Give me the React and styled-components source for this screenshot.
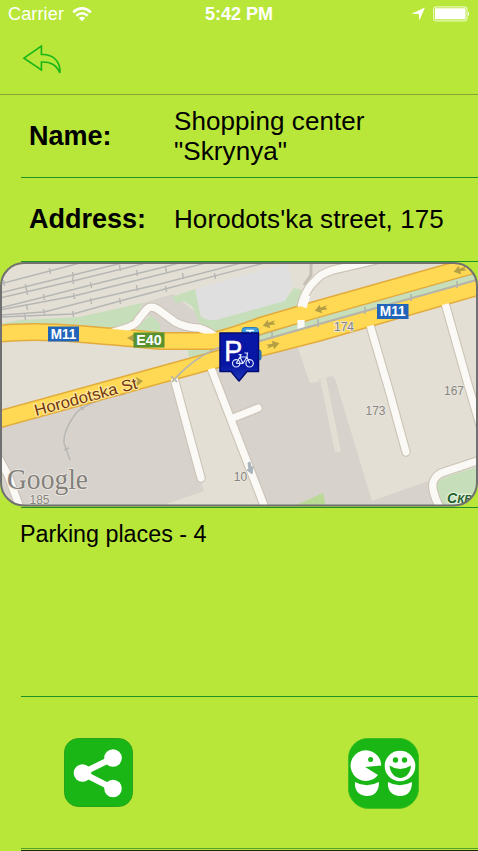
import React from "react";
import styled, { createGlobalStyle } from "styled-components";

const GlobalStyle = createGlobalStyle`
  * { box-sizing: border-box; }
  body { margin: 0; background: #b8e739; }
`;

const Screen = styled.main`
  display: flex;
  flex-direction: column;
  width: 478px;
  height: 851px;
  overflow: hidden;
  background: #b8e739;
  color: #000;
  font-family: "Liberation Sans", Arial, sans-serif;
`;

const StatusBar = styled.header`
  display: grid;
  grid-template-columns: 1fr auto 1fr;
  align-items: center;
  height: 28px;
  padding: 0 8px 0 8px;
  color: #fff;
  font-size: 18px;
  line-height: 28px;
`;

const StatusGroup = styled.div`
  display: flex;
  align-items: center;
  justify-content: ${(p) => p.$justify};
  gap: ${(p) => p.$gap}px;
  letter-spacing: 0.15px;
`;

const Clock = styled.time`
  font-weight: 700;
`;

const NavBar = styled.nav`
  display: flex;
  align-items: flex-start;
  height: 66px;
  padding: 16px 22px 0;
`;

const IconButton = styled.button`
  display: block;
  padding: 0;
  border: 0;
  background: none;
  line-height: 0;
`;

const Divider = styled.div`
  flex: none;
  height: 1px;
  margin-left: ${(p) => (p.$full ? 0 : 21)}px;
  background: ${(p) => p.$color || "#239026"};
`;

const DetailRow = styled.section`
  display: grid;
  grid-template-columns: 145px 1fr;
  align-items: center;
  height: ${(p) => p.$height}px;
  padding: 0 20px 1px 29px;
`;

const Label = styled.h2`
  margin: 0;
  font-size: 27px;
  font-weight: 700;
  line-height: 30px;
`;

const Value = styled.p`
  margin: 0;
  font-size: 26px;
  letter-spacing: 0.08px;
  line-height: 30px;
  white-space: pre-line;
`;

const MapFrame = styled.section`
  flex: none;
  height: 245px;
  line-height: 0;
`;

const Note = styled.section`
  height: 188px;
  padding: 12px 20px;
  font-size: 23.3px;
  line-height: 28px;
`;

const Actions = styled.footer`
  display: flex;
  align-items: flex-start;
  justify-content: space-between;
  height: 151px;
  padding: 41px 59px 0 64px;
`;

const Gap = styled.div`
  flex: none;
  height: 1px;
`;

const WifiIcon = () => (
  <svg width="20" height="15" viewBox="0 0 20 15">
    <g fill="none" stroke="#fff" strokeWidth="2.5">
      <path d="M1.2 5.2Q10-2.4 18.8 5.2" />
      <path d="M4.3 8.7Q10 3.9 15.7 8.7" />
    </g>
    <path d="M6.8 11Q10 8.4 13.2 11L10 14.3Z" fill="#fff" />
  </svg>
);

const LocationIcon = () => (
  <svg width="15" height="14" viewBox="0 0 15 14">
    <path d="M1.5 6.7L15 0.5L9.3 13.5L8.8 7Z" fill="#fff" />
  </svg>
);

const BatteryIcon = () => (
  <svg width="37" height="16" viewBox="0 0 37 16">
    <rect x=".6" y=".8" width="33.4" height="14" rx="2.5" fill="none" stroke="#e6f7b9" strokeWidth="1.2" />
    <rect x="2" y="2.3" width="30.6" height="11" rx=".8" fill="#fff" />
    <path d="M34.8 5.2Q37.4 7.8 34.8 10.4Z" fill="#fff" />
  </svg>
);

const BackIcon = () => (
  <svg width="40" height="32" viewBox="0 0 40 32">
    <path
      d="M2 14.2L19.4 2V10.5C31.5 10 38.4 17.5 38 28.8C34 20.7 29 17.7 19.4 18V26Z"
      fill="none" stroke="#19b619" strokeWidth="1.6"
    />
  </svg>
);

const ShareIcon = () => (
  <svg width="69" height="69" viewBox="0 0 69 69">
    <rect x=".5" y=".5" width="68" height="68" rx="14" fill="#1ab616" stroke="#27a31d" />
    <path d="M49 20L18.5 35L49 50.5" fill="none" stroke="#fff" strokeWidth="6.2" />
    <g fill="#fff">
      <circle cx="49" cy="20" r="8.8" />
      <circle cx="18.5" cy="35" r="8.8" />
      <circle cx="49" cy="50.5" r="8.8" />
    </g>
  </svg>
);

const FriendsIcon = () => (
  <svg width="71" height="71" viewBox="0 0 71 71">
    <rect x=".4" y=".2" width="70.2" height="70.2" rx="20" fill="#1ab616" stroke="#39bd20" strokeWidth=".8" />
    <g fill="#fff">
      <path d="M33.2 27.4A15.3 15.3 0 1 0 30 37L17.2 29Z" />
      <circle cx="52" cy="28" r="15.3" />
      <path d="M7 44Q18.5 50.5 31 44C31 54 26 58 19 58S6 53 7 44Z" />
      <path d="M40 44Q51.5 50.5 64 44C64 54 59 58 52 58S39 53 40 44Z" />
    </g>
    <g fill="#1ab616">
      <circle cx="22.6" cy="21.6" r="2.5" />
      <circle cx="47.5" cy="22" r="2.7" />
      <circle cx="56.5" cy="22" r="2.7" />
      <path d="M41.5 27.5Q52 34.5 63 27.5C62 44 43 44 41.5 27.5Z" />
    </g>
  </svg>
);

const rails = [
  "M0 284L80 263",
  "M0 293L73 275L122 263",
  "M0 298L73 281L150 262",
  "M0 308L44 297L91 285L160 268L183 262",
  "M0 310L74 296L138 280L210 262",
  "M0 315L44 312L91 300L160 284L245 262",
  "M0 317L73 314L120 301L165 289L268 262",
];

const railTicks = [
  [4, 283], [50, 271], [26, 287], [73, 275], [120, 268], [27, 292], [73, 281],
  [44, 297], [91, 285], [137, 273], [27, 307], [74, 296], [137, 288],
  [44, 312], [91, 301], [120, 301], [25, 317], [73, 314], [166, 270], [183, 276], [215, 276], [166, 289],
];

const whiteRoads = [
  "M113 332Q137 326 138 320L147 309Q151 305 159 310L175 322Q187 328 199 328Q210 332 218 338",
  "M301 332V311C301 300 308 287 315 281Q320 274 333 270L376 260",
  "M174 378L201 478",
  "M211 368L265 508",
  "M233 418L258 408",
  "M370 325L389 390L406 452",
  "M445 303L467 381L480 425",
  "M-3 455L8 475L20 508",
  "M441 510C434 497 431 485 434 480Q437 474 444 472L480 460",
];

const mainRoads = [
  "M-3 334Q30 330 80 334T160 341H214Q240 334 263 325L318 309L481 263",
  "M-3 420L160 375L240 353L318 333L481 286",
];

const roadArrows = [
  [460, 270, 164], [321, 309, 164], [269, 324, 164], [273, 345, -15],
];

const RoadShield = ({ x, y, width, color, children }) => (
  <g>
    <rect x={x} y={y} width={width} height="15" fill={color} />
    <text
      x={x + width / 2} y={y + 12.4} textAnchor="middle" textLength={width - 5.5}
      lengthAdjust="spacingAndGlyphs" fill="#fff" fontWeight="700" fontSize="14"
    >
      {children}
    </text>
  </g>
);

const HouseNumber = ({ x, y, children }) => (
  <text
    x={x} y={y} textAnchor="middle" fontSize="12" fill="#868481"
    stroke="#eae7de" strokeWidth="1.6" paintOrder="stroke"
  >
    {children}
  </text>
);

const ParkingPin = () => (
  <g>
    <rect x="242" y="327.5" width="16.5" height="13" rx="3" fill="#3f9cdd" stroke="#267ebd" />
    <path d="M246 330.5H254M250 330.5V334" stroke="#fff" strokeWidth="1.6" />
    <rect x="249" y="350" width="12" height="10" rx="2" fill="#3a8ad0" stroke="#1e65a5" />
    <path
      d="M220 333H258.5V371.5H247L239 381L231 371.5H220Z"
      fill="url(#pinFill)" stroke="#000b73" strokeWidth="1.5" strokeLinejoin="round"
    />
    <text x="224.2" y="360.8" fontSize="29.5" textLength="18" lengthAdjust="spacingAndGlyphs" fill="#fff" stroke="#fff" strokeWidth=".5">P</text>
    <g fill="none" stroke="#dbe4ff" strokeWidth="1.2">
      <circle cx="236.2" cy="363.3" r="3.7" />
      <circle cx="249.6" cy="363.3" r="3.7" />
      <path d="M236.2 363.3L240 357H247L249.6 363.3M240 357L243 363.3L247 357M236.2 363.3H243M238.6 354.6H241L240 357M244.5 353H247.5L247 357" />
    </g>
  </g>
);

const LocationMap = () => (
  <svg width="478" height="245" viewBox="0 262 478 245" fontFamily="'Liberation Sans', Arial, sans-serif">
    <defs>
      <clipPath id="mapClip">
        <rect x="1" y="263" width="476" height="242.5" rx="23" />
      </clipPath>
      <linearGradient id="pinFill" x1="0" y1="0" x2="0" y2="1">
        <stop offset="0" stopColor="#0a18a8" />
        <stop offset=".65" stopColor="#0615a1" />
        <stop offset="1" stopColor="#2139bb" />
      </linearGradient>
    </defs>
    <g clipPath="url(#mapClip)">
      <rect y="262" width="478" height="246" fill="#e3dfd4" />
      <g fill="#d7d2cb">
        <path d="M140 304L173 294L205 320L235 332H160Z" />
        <path d="M0 427L170 382L204 491L166 504V508H0Z" />
        <path d="M214 368L297 345L310 383L335 379L372 501L428 481L442 508H266Z" />
      </g>
      <path d="M319 379L333 376L337 387L323 391Z" fill="#d7d2cb" />
      <path d="M323 378L338 452" stroke="#e3dfd4" strokeWidth="6" />
      <g fill="#c6deba">
        <path d="M0 324L20 320L80 317L142 303L137 322L110 332L78 326L25 324Z" />
        <path d="M143 322L151 315L160 324V334H132Z" />
        <path d="M172 297L195 289L206 319L285 300L294 288L303 290L302 308L230 334L214 331L200 324L192 306L184 301L176 303Z" />
        <path d="M188 350H222V357L190 366Z" />
        <path d="M438 508L435 483L445 477L480 466V508Z" />
      </g>
      <path d="M292 507L323 493L326 507Z" fill="#b9d994" />
      <path d="M195 289L287 263L293 283L285 301L216 320Q201 320 200 314Z" fill="#dfdfdf" />
      <g fill="none" stroke="#b6b6b4" strokeWidth="1.4">
        {rails.map((d) => <path key={d} d={d} />)}
        {railTicks.map(([x, y]) => <path key={`${x}-${y}`} d={`M${x - 0.5} ${y - 3}L${x + 0.5} ${y + 3}`} />)}
        <path d="M70 460L64 443Q63 430 77 412Q91 400 125 394" />
        <path d="M79 405L84 410M64 450L69 448" />
      </g>
      <path d="M311 262V275L304 285" fill="none" stroke="#c5bfb3" strokeWidth="3" />
      <path d="M235 346L318 321L481 276" fill="none" stroke="#c6deba" strokeWidth="12" />
      <g fill="none" stroke="#cdc4b8" strokeWidth="9.5" strokeLinecap="round">
        {whiteRoads.map((d) => <path key={d} d={d} />)}
      </g>
      <g fill="none" stroke="#e2ab3b" strokeWidth="18">
        {mainRoads.map((d) => <path key={d} d={d} />)}
      </g>
      <g fill="none" stroke="#faf9f5" strokeWidth="7.2" strokeLinecap="round">
        {whiteRoads.map((d) => <path key={d} d={d} />)}
      </g>
      <g fill="none" stroke="#ffd954" strokeWidth="15">
        {mainRoads.map((d) => <path key={d} d={d} />)}
      </g>
      <path d="M255 340L318 322L481 276" fill="none" stroke="#b8b49a" strokeWidth="7" />
      <path d="M255 340L318 321L481 275" fill="none" stroke="#c6deba" strokeWidth="5.2" />
      <path d="M301 320V329" stroke="#faf9f5" strokeWidth="7" />
      <path d="M303 307L307 295" stroke="#faf9f5" strokeWidth="7.2" />
      <g fill="none" stroke="#b6b5ad" strokeWidth="1.7">
        <path d="M172 382Q193 358 218 348L255 342L318 324L481 279" />
        <path d="M171 376L177 382M272 332V339M318 319V327M365 307V314M411 294V301M457 281V288" />
      </g>
      {roadArrows.map(([x, y, angle]) => (
        <path
          key={`${x}-${y}`} transform={`translate(${x} ${y}) rotate(${angle})`}
          d="M-6.5-2L0-1.4V-4.5L6.5 0L0 4.5V1.4L-6.5 2L-4.5 0Z" fill="#b59f45"
        />
      ))}
      <path d="M127 338L134 334V342Z" fill="#b59f45" />
      <path d="M136 377L143 381L137 386Z" fill="#b59f45" />
      <path d="M248 463L250 462L251 467L253 467L252 474L247 470L249 469Z" fill="#a9b3bc" stroke="#a9b3bc" strokeWidth="1" />
      <RoadShield x={48} y={326.5} width={31} color="#2165bb">M11</RoadShield>
      <RoadShield x={133.5} y={332.5} width={31} color="#55922f">E40</RoadShield>
      <RoadShield x={377} y={304} width={31.5} color="#2165bb">M11</RoadShield>
      <HouseNumber x={344} y={331}>174</HouseNumber>
      <HouseNumber x={375.5} y={415}>173</HouseNumber>
      <HouseNumber x={454} y={394.5}>167</HouseNumber>
      <HouseNumber x={240.5} y={481}>10</HouseNumber>
      <HouseNumber x={39.5} y={504}>185</HouseNumber>
      <text
        transform="translate(36 416) rotate(-15.2)" fontSize="16" textLength="106"
        lengthAdjust="spacingAndGlyphs"
        fill="#71360c" stroke="#ffe8a0" strokeWidth="2.2" paintOrder="stroke"
      >
        Horodotska St
      </text>
      <text
        x="447" y="503" fontSize="14" fontStyle="italic" fontWeight="700" fill="#23622f"
        stroke="#e4f0d9" strokeWidth="2.5" paintOrder="stroke"
      >
        С<tspan fontSize="11.5">КВ</tspan>
      </text>
      <text
        x="7" y="489" fontFamily="'Liberation Serif', serif" fontSize="29" textLength="81"
        lengthAdjust="spacingAndGlyphs" fill="#83807c" stroke="#eeeae3" strokeWidth="1.6" paintOrder="stroke"
      >
        Google
      </text>
      <ParkingPin />
    </g>
    <rect x="1" y="263" width="476" height="242.5" rx="23" fill="none" stroke="#707070" strokeWidth="2" />
  </svg>
);

export default function App() {
  return (
    <Screen>
      <GlobalStyle />
      <StatusBar>
        <StatusGroup $justify="flex-start" $gap={8}>
          <span>Carrier</span>
          <WifiIcon />
        </StatusGroup>
        <Clock>5:42 PM</Clock>
        <StatusGroup $justify="flex-end" $gap={8}>
          <LocationIcon />
          <BatteryIcon />
        </StatusGroup>
      </StatusBar>
      <NavBar>
        <IconButton aria-label="Back"><BackIcon /></IconButton>
      </NavBar>
      <Divider $full $color="#87a331" />
      <DetailRow $height={82}>
        <Label>Name:</Label>
        <Value>{'Shopping center\n"Skrynya"'}</Value>
      </DetailRow>
      <Divider />
      <DetailRow $height={83}>
        <Label>Address:</Label>
        <Value>Horodots'ka street, 175</Value>
      </DetailRow>
      <Divider />
      <MapFrame><LocationMap /></MapFrame>
      <Divider />
      <Note>Parking places - 4</Note>
      <Divider />
      <Actions>
        <IconButton aria-label="Share"><ShareIcon /></IconButton>
        <IconButton aria-label="Friends"><FriendsIcon /></IconButton>
      </Actions>
      <Divider $color="#55a02b" />
      <Gap />
      <Divider $color="#1c2b0c" />
    </Screen>
  );
}
